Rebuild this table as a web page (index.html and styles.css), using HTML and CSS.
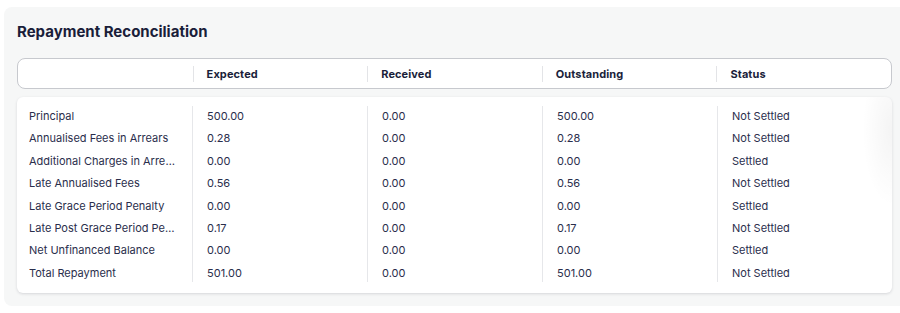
FILE: index.html
```html
<!DOCTYPE html>
<html lang="en">
<head>
<meta charset="utf-8">
<title>Repayment Reconciliation</title>
<link rel="stylesheet" href="styles.css">
</head>
<body>
<section class="panel">
  <h2 class="title">Repayment Reconciliation</h2>
  <div class="head">
    <div class="hcell"></div>
    <div class="hcell">Expected</div>
    <div class="hcell">Received</div>
    <div class="hcell">Outstanding</div>
    <div class="hcell">Status</div>
  </div>
  <div class="card">
    <div class="row"><div class="cell">Principal</div><div class="cell">500.00</div><div class="cell">0.00</div><div class="cell">500.00</div><div class="cell">Not Settled</div></div>
    <div class="row"><div class="cell">Annualised Fees in Arrears</div><div class="cell">0.28</div><div class="cell">0.00</div><div class="cell">0.28</div><div class="cell">Not Settled</div></div>
    <div class="row"><div class="cell">Additional Charges in Arrears</div><div class="cell">0.00</div><div class="cell">0.00</div><div class="cell">0.00</div><div class="cell">Settled</div></div>
    <div class="row"><div class="cell">Late Annualised Fees</div><div class="cell">0.56</div><div class="cell">0.00</div><div class="cell">0.56</div><div class="cell">Not Settled</div></div>
    <div class="row"><div class="cell">Late Grace Period Penalty</div><div class="cell">0.00</div><div class="cell">0.00</div><div class="cell">0.00</div><div class="cell">Settled</div></div>
    <div class="row"><div class="cell">Late Post Grace Period Penalty</div><div class="cell">0.17</div><div class="cell">0.00</div><div class="cell">0.17</div><div class="cell">Not Settled</div></div>
    <div class="row"><div class="cell">Net Unfinanced Balance</div><div class="cell">0.00</div><div class="cell">0.00</div><div class="cell">0.00</div><div class="cell">Settled</div></div>
    <div class="row total"><div class="cell">Total Repayment</div><div class="cell">501.00</div><div class="cell">0.00</div><div class="cell">501.00</div><div class="cell">Not Settled</div></div>
  </div>
</section>
</body>
</html>
```
FILE: styles.css
```css
* { box-sizing: border-box; }
html, body { margin: 0; padding: 0; background: #ffffff; }
body {
  font-family: Inter, "Noto Sans", "Liberation Sans", sans-serif;
  color: #2a2e4c;
}
.panel {
  margin: 7px 0 0 4px;
  height: 299px;
  background: #f6f7f7;
  border-radius: 8px 0 0 8px;
  padding: 15px 8px 0 13px;
}
.title {
  margin: 0;
  font-size: 15px;
  line-height: 20px;
  font-weight: 700;
  color: #1a1e3a;
  letter-spacing: 0;
}
.head {
  margin-top: 16px;
  height: 31px;
  background: #ffffff;
  border: 1px solid #c7c9ce;
  border-radius: 8px;
  display: grid;
  grid-template-columns: repeat(5, 1fr);
  align-items: center;
}
.hcell {
  height: 16px;
  line-height: 16px;
  padding-left: 13px;
  font-size: 11px;
  font-weight: 700;
  color: #1a1e3a;
  letter-spacing: 0.1px;
}
.hcell + .hcell { border-left: 1px solid #e3e4e7; }
.card {
  position: relative;
  margin-top: 8px;
  height: 196px;
  background: #ffffff;
  border-radius: 6px;
  box-shadow: 0 1px 3px rgba(20, 24, 40, 0.14);
  padding: 8px 0 9px;
  overflow: hidden;
}
.card::after {
  content: "";
  position: absolute;
  top: 0;
  right: 0;
  width: 30px;
  height: 110px;
  background: radial-gradient(ellipse at 100% 30%, rgba(0,0,0,0.045), rgba(0,0,0,0) 70%);
  pointer-events: none;
}
.row {
  display: grid;
  grid-template-columns: repeat(5, 1fr);
  height: 22.4px;
}
.cell {
  font-size: 11px;
  line-height: 22.4px;
  padding-left: 14px;
  white-space: nowrap;
  overflow: hidden;
  text-overflow: ellipsis;
  color: #2a2e4c;
}
.cell:first-child { padding-left: 12px; padding-right: 14px; }
.cell + .cell { border-left: 1px solid #e6e7ea; }
.row:first-child .cell + .cell { border-image: linear-gradient(transparent 2px, #e6e7ea 2px) 1; }
.row.total .cell + .cell { border-image: linear-gradient(transparent 1px, #e6e7ea 1px, #e6e7ea 20px, transparent 20px) 1; }
```
